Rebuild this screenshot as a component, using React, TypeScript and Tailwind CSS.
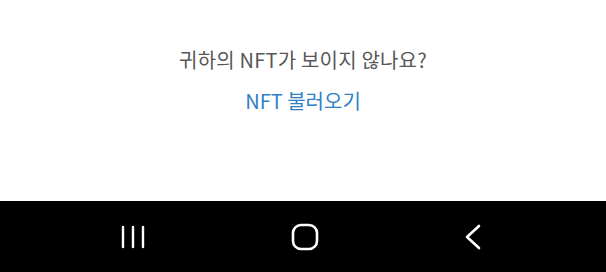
export default function App() {
  return (
    <div
      className="flex h-[272px] w-[606px] flex-col bg-white"
      style={{ fontFamily: '"Noto Sans CJK KR", "Noto Sans", sans-serif' }}
    >
      <div className="flex flex-1 flex-col items-center pt-[46px]">
        <p className="text-[20px] leading-[28px] tracking-[0.2px] text-[#575757]">귀하의 NFT가 보이지 않나요?</p>
        <button className="mt-[13px] text-[20px] leading-[28px] text-[#2f80c8]">NFT 불러오기</button>
      </div>
      <nav className="flex h-[71px] items-center justify-between bg-black pl-[120px] pr-[124px]">
        <svg width="26" height="26" viewBox="0 0 26 26" fill="none" stroke="white" strokeWidth="2.4" strokeLinecap="round">
          <path d="M3 3v20M13 3v20M23 3v20" />
        </svg>
        <svg width="28" height="28" viewBox="0 0 28 28" fill="none" stroke="white" strokeWidth="2.6">
          <rect x="2" y="2" width="24" height="24" rx="8" />
        </svg>
        <svg width="18" height="28" viewBox="0 0 18 28" fill="none" stroke="white" strokeWidth="2.6" strokeLinecap="round" strokeLinejoin="round">
          <path d="M15 3L3 14l12 11" />
        </svg>
      </nav>
    </div>
  );
}
